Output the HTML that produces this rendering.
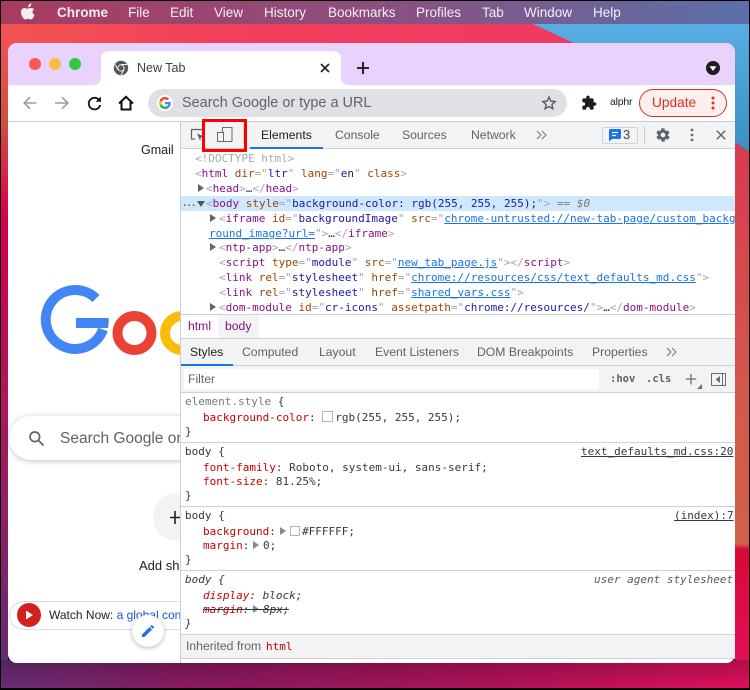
<!DOCTYPE html>
<html><head><meta charset="utf-8"><style>
html,body{margin:0;padding:0;background:#000}
#p{position:relative;width:750px;height:690px;overflow:hidden;background:#000;font-family:"Liberation Sans",sans-serif}
#p>*{position:absolute}
.t{position:absolute;white-space:pre;line-height:16px;height:16px}
.m{font-family:"DejaVu Sans Mono","Liberation Mono",monospace;font-size:11px;color:#303942}
.t.m{transform:translateY(1px)}
.s{font-size:12.2px;color:#5f6368}
.mb{color:#fff;font-size:13.5px;top:5px;opacity:.9}
.b{color:#a3a3ad}.g{color:#881280}.a{color:#994500}.v{color:#1a1aa6}.l{color:#1a73e8;text-decoration:underline}
.r{color:#c80000}.u{text-decoration:underline}
.h{position:absolute;left:181px;width:554px;height:1px;background:#cdd0d4}
.box{display:inline-block;width:9px;height:9px;border:1px solid #b5b5b5;vertical-align:-1px;background:#fff}
.tri{display:inline-block;width:0;height:0;border-left:6px solid #646464;border-top:4px solid transparent;border-bottom:4px solid transparent}
</style></head><body><div id="p">
<svg style="left:1px;top:1px" width="748" height="687" viewBox="1 1 748 687">
<defs>
<linearGradient id="bg1" x1="0" y1="0" x2="1" y2="0"><stop offset="0" stop-color="#f25450"/><stop offset=".3" stop-color="#f13f5c"/><stop offset="1" stop-color="#ef3763"/></linearGradient>
<linearGradient id="menu" x1="0" y1="0" x2="1" y2="0"><stop offset="0" stop-color="#a93b60"/><stop offset=".5" stop-color="#8c4f7f"/><stop offset="1" stop-color="#5a70a8"/></linearGradient>
<linearGradient id="blue" x1="0" y1="0" x2="0" y2="1"><stop offset="0" stop-color="#58aee2"/><stop offset="1" stop-color="#3a90c4"/></linearGradient>
<linearGradient id="lft" x1="0" y1="0" x2="0" y2="1"><stop offset="0" stop-color="#f25450"/><stop offset=".15" stop-color="#d05040"/><stop offset=".24" stop-color="#d82048"/><stop offset=".3" stop-color="#d4004f"/><stop offset=".62" stop-color="#a8185f"/><stop offset="1" stop-color="#632c72"/></linearGradient>
<linearGradient id="rgt" x1="0" y1="0" x2="0" y2="1"><stop offset="0" stop-color="#d83a50"/><stop offset=".5" stop-color="#d25a4c"/><stop offset=".77" stop-color="#d0604c"/><stop offset=".78" stop-color="#d80838"/><stop offset="1" stop-color="#e0105a"/></linearGradient>
<linearGradient id="bot" x1="0" y1="0" x2="1" y2="0"><stop offset="0" stop-color="#6a2d75"/><stop offset=".25" stop-color="#8a1a60"/><stop offset=".65" stop-color="#b01258"/><stop offset="1" stop-color="#e0105c"/></linearGradient>
<linearGradient id="shade" x1="0" y1="0" x2="0" y2="1"><stop offset="0" stop-color="#000" stop-opacity=".22"/><stop offset="1" stop-color="#000" stop-opacity="0"/></linearGradient>
</defs>
<rect x="1" y="24" width="748" height="120" fill="url(#bg1)"/>
<polygon points="533,24 750,24 750,153 735,142 735,60 576,44" fill="url(#blue)"/>
<rect x="1" y="24" width="7" height="640" fill="url(#lft)"/>
<polygon points="735,142 750,153 750,664 735,664" fill="url(#rgt)"/>
<rect x="1" y="660" width="748" height="28" fill="url(#bot)"/>
<rect x="1" y="660" width="748" height="28" fill="url(#shade)"/>
<rect x="1" y="1" width="748" height="23" fill="url(#menu)"/>
</svg>
<svg style="left:21px;top:3px" width="15" height="18" viewBox="0 0 15 18"><path fill="#f4f0f2" d="M10.4 .3c.1 1.1-.3 2-.9 2.8-.6.7-1.5 1.2-2.4 1.1-.1-1 .4-2 .9-2.6C8.600.9 9.600.4 10.400.3zM13.200 6.100c-1 .6-1.700 1.600-1.700 2.800 0 1.400.9 2.500 2.100 3-.3.900-.7 1.700-1.200 2.500-.7 1-1.500 2.100-2.600 2.100s-1.400-.7-2.700-.7-1.700.7-2.700.7c-1.100 0-1.900-1.100-2.700-2.200C.6 12.800 0 10.900 0 9.200 0 6.500 1.800 5 3.500 5c1.100 0 2.100.8 2.800.8s1.800-.8 3.100-.8c1.100 0 2.900.4 3.800 1.100z"/></svg>
<span class="t mb" style="left:57px;font-weight:700">Chrome</span>
<span class="t mb" style="left:128px">File</span>
<span class="t mb" style="left:170px">Edit</span>
<span class="t mb" style="left:214px">View</span>
<span class="t mb" style="left:264px">History</span>
<span class="t mb" style="left:328px">Bookmarks</span>
<span class="t mb" style="left:416px">Profiles</span>
<span class="t mb" style="left:482px">Tab</span>
<span class="t mb" style="left:524px">Window</span>
<span class="t mb" style="left:593px">Help</span>

<div style="left:8px;top:43px;width:727px;height:620px;background:#fff;border-radius:9px;overflow:hidden"></div>
<div style="left:8px;top:43px;width:727px;height:42px;background:#e9d2fb;border-radius:9px 9px 0 0"></div>
<svg style="left:90px;top:50px" width="262" height="36" viewBox="0 0 262 36"><path fill="#fff" d="M3 35c6 0 8-3 8-8V9c0-5 3-8 8-8h224c5 0 8 3 8 8v18c0 5 2 8 8 8z"/></svg>
<svg style="left:25px;top:54px" width="60" height="20"><circle cx="10" cy="10" r="6" fill="#fc5753"/><circle cx="30" cy="10" r="6" fill="#fdbc40"/><circle cx="50" cy="10" r="6" fill="#33c748"/></svg>
<svg style="left:113px;top:60px" width="16" height="16" viewBox="0 0 16 16"><circle cx="8" cy="8" r="7.200" fill="#55555c"/><circle cx="8" cy="8" r="3.600" fill="#fff"/><circle cx="8" cy="8" r="2.700" fill="#55555c"/><path d="M8 4.500h6M5 9.700L2 4.500M11 9.700L8 15" stroke="#fff" stroke-width=".9"/></svg>
<span class="t" style="left:137px;top:60px;font-size:12.5px;color:#3c4043">New Tab</span>
<svg style="left:320px;top:63px" width="10" height="10"><path d="M1 1l8 8M9 1l-8 8" stroke="#222" stroke-width="1.700"/></svg>
<svg style="left:357px;top:62px" width="12" height="12"><path d="M6 0v12M0 6h12" stroke="#111" stroke-width="1.800"/></svg>
<svg style="left:705px;top:60px" width="16" height="16"><circle cx="8" cy="8" r="7" fill="#1f1b20"/><path d="M4.500 6.200h7L8 11z" fill="#fff"/></svg>

<svg style="left:22px;top:95px" width="120" height="16" viewBox="0 0 120 16" fill="none"><path d="M14.500 8H2.500M8 2.200L2.200 8 8 13.800" stroke="#9a9da1" stroke-width="1.600"/><path d="M33 8h12.500M40 2.200L45.800 8 40 13.800" stroke="#9a9da1" stroke-width="1.600"/><path d="M77.500 5.500A5.800 5.800 0 1 0 78.200 10" stroke="#111" stroke-width="1.800"/><path d="M78.900 1.500v5.200h-5.200z" fill="#111"/><path d="M97 8.500L104 1.800 111 8.500M99.500 7v7.500h9V7" stroke="#111" stroke-width="2"/></svg>
<div style="left:148px;top:89px;width:419px;height:28px;border-radius:14px;background:#dfe1e5"></div>
<div style="left:157px;top:95px;width:16px;height:16px;border-radius:8px;background:#fff"></div>
<svg style="left:159px;top:97px" width="12" height="12" viewBox="0 0 24 24"><path fill="#4285f4" d="M23.500 12.300c0-.9-.1-1.600-.2-2.300H12v4.500h6.500c-.3 1.400-1.100 2.700-2.400 3.500v3h3.900c2.300-2.100 3.500-5.200 3.500-8.700z"/><path fill="#34a853" d="M12 24c3.200 0 6-1.100 8-2.900l-3.900-3c-1.100.7-2.500 1.200-4.100 1.200-3.100 0-5.800-2.100-6.700-5H1.300v3.100C3.300 21.300 7.300 24 12 24z"/><path fill="#fbbc05" d="M5.300 14.300c-.5-1.400-.5-3 0-4.500V6.700h-4c-1.700 3.300-1.700 7.300 0 10.700z"/><path fill="#ea4335" d="M12 4.800c1.800 0 3.300.6 4.600 1.800l3.400-3.400C17.900 1.200 15.200 0 12 0 7.300 0 3.300 2.700 1.300 6.700l4 3.100c.9-2.900 3.600-5 6.700-5z"/></svg>
<span class="t" style="left:182px;top:95px;font-size:14.45px;color:#5f6368">Search Google or type a URL</span>
<svg style="left:541px;top:95px" width="16" height="16" viewBox="0 0 24 24"><path fill="none" stroke="#55575a" stroke-width="2" d="M12 3l2.700 6.100 6.600.7-5 4.400 1.500 6.500-5.800-3.400-5.800 3.400 1.500-6.500-5-4.400 6.600-.7z"/></svg>
<svg style="left:581px;top:95px" width="16" height="16" viewBox="0 0 24 24"><path fill="#1c1c20" d="M20.500 11H19V7a2 2 0 0 0-2-2h-4V3.500a2.500 2.500 0 0 0-5 0V5H4a2 2 0 0 0-2 2v3.800h1.500a2.700 2.700 0 0 1 0 5.400H2V20a2 2 0 0 0 2 2h3.800v-1.500a2.700 2.700 0 0 1 5.400 0V22H17a2 2 0 0 0 2-2v-4h1.500a2.500 2.500 0 0 0 0-5z"/></svg>
<span class="t" style="left:610px;top:94px;font-size:10.5px;color:#222;letter-spacing:-.2px">alphr</span>
<div style="left:639px;top:89px;width:86px;height:26px;border:1px solid #d93025;border-radius:14px;background:#fcefed"></div>
<span class="t" style="left:652px;top:95px;font-size:13.7px;color:#d93025">Update</span>
<svg style="left:710px;top:95px" width="6" height="16"><circle cx="3" cy="3" r="1.500" fill="#d93025"/><circle cx="3" cy="8" r="1.500" fill="#d93025"/><circle cx="3" cy="13" r="1.500" fill="#d93025"/></svg>
<div style="left:8px;top:121px;width:727px;height:1px;background:#cbcbcb"></div>

<span class="t" style="left:141px;top:142px;font-size:12.500px;color:#202124">Gmail</span>
<svg style="left:8px;top:270px" width="172" height="100" viewBox="8 270 172 100" fill="none"><path d="M96 298.500A29.500 29.500 0 1 0 103 329.500" stroke="#4285f4" stroke-width="10"/><path d="M76 318h32.500c.4 3 .2 7-.5 10H76z" fill="#4285f4"/><circle cx="134.500" cy="333" r="17" stroke="#ea4335" stroke-width="10"/><circle cx="182" cy="333" r="17" stroke="#fbbc05" stroke-width="10"/></svg>
<div style="left:9px;top:416px;width:260px;height:44px;border-radius:22px;background:#fff;box-shadow:0 1px 6px rgba(32,33,36,.28)"></div>
<svg style="left:28px;top:430px" width="17" height="17" viewBox="0 0 17 17" fill="none"><circle cx="6.800" cy="6.800" r="4.800" stroke="#5f6368" stroke-width="1.700"/><path d="M10.500 10.500l5 5" stroke="#5f6368" stroke-width="1.700"/></svg>
<span class="t" style="left:60px;top:431px;font-size:15.5px;color:#5f6368">Search Google or</span>
<div style="left:153px;top:493px;width:48px;height:48px;border-radius:24px;background:#f1f3f4"></div>
<svg style="left:170px;top:511px" width="10" height="14"><path d="M5 0v13M0 6.500h10" stroke="#202124" stroke-width="1.600"/></svg>
<span class="t" style="left:139px;top:558px;font-size:13px;color:#202124">Add sh</span>
<div style="left:9px;top:601px;width:260px;height:27px;border:1px solid #dadce0;border-radius:15px;background:#fff"></div>
<svg style="left:17px;top:603px" width="24" height="24"><circle cx="12" cy="12" r="12" fill="#d3211f"/><path d="M9 7.500l7 4.500-7 4.500z" fill="#fff"/></svg>
<span class="t" style="left:49px;top:607px;font-size:12px;color:#202124">Watch Now: <span style="color:#1a56d6">a global con</span></span>
<div style="left:132px;top:615px;width:32px;height:32px;border-radius:16px;background:#fff;box-shadow:0 1px 4px rgba(32,33,36,.35)"></div>
<svg style="left:141px;top:624px" width="14" height="14" viewBox="0 0 14 14"><path fill="#1a73e8" d="M1 10.500V13h2.500L11 5.500 8.500 3zM12.800 3.700a.7.700 0 0 0 0-1L11.300 1.200a.7.700 0 0 0-1 0L9.200 2.300l2.500 2.500z"/></svg>

<div style="left:180px;top:122px;width:555px;height:541px;background:#fff;border-left:1px solid #cbcdd1;box-sizing:border-box;border-radius:0 0 9px 0;overflow:hidden"></div>
<div style="left:181px;top:122px;width:554px;height:26px;background:#f1f3f4"></div>
<div class="h" style="top:148px"></div>
<svg style="left:190px;top:127px" width="16" height="16" viewBox="0 0 16 16" fill="none"><path d="M5 12H1.500V2.500h11V6" stroke="#5f6368" stroke-width="1.200"/><path d="M7 6.500l7 3-3 1-1 3z" fill="#5f6368"/></svg>
<svg style="left:216px;top:126px" width="18" height="18" viewBox="0 0 18 18" fill="none" stroke="#6a6e73" stroke-width="1"><path d="M6.500 6V1.500h9.500v14H8"/><rect x="1.500" y="6.500" width="6" height="9"/></svg>
<div style="left:243px;top:126px;width:1px;height:18px;background:#cbcdd1"></div>
<span class="t s" style="left:261px;top:127px;color:#202124">Elements</span>
<span class="t s" style="left:335px;top:127px">Console</span>
<span class="t s" style="left:402px;top:127px">Sources</span>
<span class="t s" style="left:471px;top:127px">Network</span>
<svg style="left:536px;top:130px" width="11" height="10" fill="none" stroke="#70757a"><path d="M1 1l4 4-4 4M6 1l4 4-4 4"/></svg>
<div style="left:250px;top:147px;width:73px;height:2px;background:#1a73e8"></div>
<div style="left:602px;top:127px;width:34px;height:15px;border:1px solid #cfd2d6;border-radius:2px;box-sizing:content-box"></div>
<svg style="left:609px;top:129px" width="12" height="12" viewBox="0 0 12 12"><path fill="#1a73e8" d="M1.500 0h9A1.500 1.500 0 0 1 12 1.500v7A1.500 1.500 0 0 1 10.500 10H3l-3 2.500V1.500A1.500 1.500 0 0 1 1.500 0z"/><path d="M3 3.500h6M3 6.500h4" stroke="#fff" stroke-width="1.200"/></svg>
<span class="t s" style="left:623px;top:127px;color:#444;font-size:13px">3</span>
<div style="left:644px;top:126px;width:1px;height:18px;background:#cbcdd1"></div>
<svg style="left:655px;top:127px" width="16" height="16" viewBox="0 0 24 24"><path fill="#5f6368" fill-rule="evenodd" d="M19.400 13c.1-.3.100-.7.100-1s0-.7-.1-1l2.100-1.600c.2-.2.300-.4.100-.6l-2-3.500c-.1-.2-.4-.3-.6-.2l-2.500 1c-.5-.4-1.100-.7-1.700-1l-.4-2.600c0-.3-.2-.5-.5-.5h-4c-.3 0-.5.200-.5.500l-.4 2.600c-.6.300-1.200.6-1.700 1l-2.500-1c-.2-.1-.5 0-.6.200l-2 3.500c-.1.200-.1.500.1.600L4.600 11c-.1.300-.1.700-.1 1s0 .7.100 1l-2.100 1.600c-.2.200-.3.400-.1.600l2 3.500c.1.200.4.300.6.200l2.500-1c.5.400 1.100.7 1.700 1l.4 2.600c0 .3.200.5.500.5h4c.3 0 .5-.2.500-.5l.4-2.600c.6-.3 1.200-.6 1.700-1l2.500 1c.2.100.5 0 .6-.2l2-3.500c.1-.2.100-.5-.1-.6zM12 15.500a3.500 3.500 0 1 1 0-7 3.500 3.500 0 0 1 0 7z"/></svg>
<svg style="left:689px;top:128px" width="6" height="14"><circle cx="3" cy="2" r="1.400" fill="#6a6e73"/><circle cx="3" cy="7" r="1.400" fill="#6a6e73"/><circle cx="3" cy="12" r="1.400" fill="#6a6e73"/></svg>
<svg style="left:716px;top:130px" width="10" height="10"><path d="M.8.800l8.400 8.400M9.200.800L.8 9.200" stroke="#5f6368" stroke-width="1.400"/></svg>

<div style="left:181px;top:196px;width:554px;height:15px;background:#cfe8fc"></div>
<span class="t m" style="left:195px;top:150px;color:#a9a9a9">&lt;!DOCTYPE html&gt;</span>
<span class="t m" style="left:195px;top:165px"><span class="b">&lt;</span><span class="g">html</span> <span class="a">dir</span><span class="b">="</span><span class="v">ltr</span><span class="b">"</span> <span class="a">lang</span><span class="b">="</span><span class="v">en</span><span class="b">"</span> <span class="a">class</span><span class="b">&gt;</span></span>
<i class="tri" style="position:absolute;left:198px;top:184px"></i>
<span class="t m" style="left:206px;top:180px"><span class="b">&lt;</span><span class="g">head</span><span class="b">&gt;</span>…<span class="b">&lt;/</span><span class="g">head</span><span class="b">&gt;</span></span>
<span class="t m" style="left:182px;top:195px;color:#5f6368;font-size:9px;letter-spacing:-1px;font-weight:700">...</span>
<i style="position:absolute;left:197px;top:201px;width:0;height:0;border-top:6px solid #555;border-left:4px solid transparent;border-right:4px solid transparent"></i>
<span class="t m" style="left:206px;top:195px"><span class="b">&lt;</span><span class="g">body</span> <span class="a">style</span><span class="b">="</span><span class="v">background-color: rgb(255, 255, 255);</span><span class="b">"&gt;</span> <span style="color:#777">==</span> <i style="color:#777">$0</i></span>
<i class="tri" style="position:absolute;left:210px;top:214px"></i>
<span class="t m" style="left:219px;top:210px"><span class="b">&lt;</span><span class="g">iframe</span> <span class="a">id</span><span class="b">="</span><span class="v">backgroundImage</span><span class="b">"</span> <span class="a">src</span><span class="b">="</span><span class="l" style="display:inline-block;width:291px;overflow:hidden;vertical-align:top;height:15px">chrome-untrusted://new-tab-page/custom_backg</span></span>
<span class="t m" style="left:209px;top:225px"><span class="l">round_image?url=</span><span class="b">"&gt;</span>…<span class="b">&lt;/</span><span class="g">iframe</span><span class="b">&gt;</span></span>
<i class="tri" style="position:absolute;left:210px;top:243px"></i>
<span class="t m" style="left:219px;top:239px"><span class="b">&lt;</span><span class="g">ntp-app</span><span class="b">&gt;</span>…<span class="b">&lt;/</span><span class="g">ntp-app</span><span class="b">&gt;</span></span>
<span class="t m" style="left:219px;top:254px"><span class="b">&lt;</span><span class="g">script</span> <span class="a">type</span><span class="b">="</span><span class="v">module</span><span class="b">"</span> <span class="a">src</span><span class="b">="</span><span class="l">new_tab_page.js</span><span class="b">"&gt;&lt;/</span><span class="g">script</span><span class="b">&gt;</span></span>
<span class="t m" style="left:219px;top:269px"><span class="b">&lt;</span><span class="g">link</span> <span class="a">rel</span><span class="b">="</span><span class="v">stylesheet</span><span class="b">"</span> <span class="a">href</span><span class="b">="</span><span class="l">chrome://resources/css/text_defaults_md.css</span><span class="b">"&gt;</span></span>
<span class="t m" style="left:219px;top:284px"><span class="b">&lt;</span><span class="g">link</span> <span class="a">rel</span><span class="b">="</span><span class="v">stylesheet</span><span class="b">"</span> <span class="a">href</span><span class="b">="</span><span class="l">shared_vars.css</span><span class="b">"&gt;</span></span>
<i class="tri" style="position:absolute;left:210px;top:303px"></i>
<span class="t m" style="left:219px;top:299px"><span class="b">&lt;</span><span class="g">dom-module</span> <span class="a">id</span><span class="b">="</span><span class="v">cr-icons</span><span class="b">"</span> <span class="a">assetpath</span><span class="b">="</span><span class="v">chrome://resources/</span><span class="b">"&gt;</span>…<span class="b">&lt;/</span><span class="g">dom-module</span><span class="b">&gt;</span></span>

<div class="h" style="top:314px"></div>
<div style="left:218px;top:315px;width:41px;height:23px;background:#f1f3f4"></div>
<span class="t s" style="left:188px;top:318px;color:#881280">html</span>
<span class="t s" style="left:225px;top:318px;color:#881280">body</span>
<div style="left:181px;top:338px;width:554px;height:28px;background:#f1f3f4"></div>
<div class="h" style="top:338px"></div>
<div class="h" style="top:365px"></div>
<div style="left:181px;top:364px;width:52px;height:2px;background:#1a73e8"></div>
<span class="t s" style="left:190px;top:344px;color:#202124">Styles</span>
<span class="t s" style="left:242px;top:344px">Computed</span>
<span class="t s" style="left:319px;top:344px">Layout</span>
<span class="t s" style="left:375px;top:344px">Event Listeners</span>
<span class="t s" style="left:477px;top:344px">DOM Breakpoints</span>
<span class="t s" style="left:592px;top:344px">Properties</span>
<svg style="left:666px;top:347px" width="11" height="10" fill="none" stroke="#70757a"><path d="M1 1l4 4-4 4M6 1l4 4-4 4"/></svg>
<div style="left:181px;top:366px;width:554px;height:26px;background:#f1f3f4"></div>
<div style="left:184px;top:369px;width:415px;height:20px;background:#fff"></div>
<span class="t s" style="left:188px;top:371px;color:#5f6368">Filter</span>
<span class="t m" style="left:610px;top:370px;font-weight:700;color:#5f6368;font-size:10.500px">:hov</span>
<span class="t m" style="left:646px;top:370px;font-weight:700;color:#5f6368;font-size:10.500px">.cls</span>
<svg style="left:685px;top:373px" width="18" height="16" fill="none"><path d="M6 1v10.500M.8 6h10.500" stroke="#6a6e73" stroke-width="1.300"/><path d="M17 11v5h-5z" fill="#6a6e73"/></svg>
<svg style="left:711px;top:373px" width="15" height="14" fill="none"><rect x=".5" y=".5" width="14" height="12" stroke="#6a6e73"/><path d="M11.500 .5v12" stroke="#6a6e73"/><path d="M9 3v7l-4.500-3.500z" fill="#6a6e73"/></svg>
<div class="h" style="top:392px"></div>

<span class="t m" style="left:185px;top:393px"><span style="color:#777">element.style</span> {</span>
<span class="t m" style="left:203px;top:409px"><span class="r">background-color</span>: <span class="box" style="margin-right:2px"></span>rgb(255, 255, 255);</span>
<span class="t m" style="left:185px;top:423px">}</span>
<div class="h" style="top:442px"></div>
<span class="t m" style="left:185px;top:443px">body {</span>
<span class="t m u" style="left:581px;top:443px">text_defaults_md.css:20</span>
<span class="t m" style="left:203px;top:459px"><span class="r">font-family</span>: Roboto, system-ui, sans-serif;</span>
<span class="t m" style="left:203px;top:473px"><span class="r">font-size</span>: 81.25%;</span>
<span class="t m" style="left:185px;top:487px">}</span>
<div class="h" style="top:506px"></div>
<span class="t m" style="left:185px;top:507px">body {</span>
<span class="t m u" style="left:674px;top:507px">(index):7</span>
<span class="t m" style="left:203px;top:523px"><span class="r">background</span>:</span>
<i class="tri" style="position:absolute;left:280px;top:527px;border-left-color:#888"></i>
<i class="box" style="position:absolute;left:290px;top:526px;width:8px;height:8px"></i>
<span class="t m" style="left:302px;top:523px">#FFFFFF;</span>
<span class="t m" style="left:203px;top:537px"><span class="r">margin</span>:</span>
<i class="tri" style="position:absolute;left:253px;top:541px;border-left-color:#888"></i>
<span class="t m" style="left:263px;top:537px">0;</span>
<span class="t m" style="left:185px;top:551px">}</span>
<div class="h" style="top:570px"></div>
<span class="t m" style="left:185px;top:571px;font-style:italic">body {</span>
<span class="t m" style="left:594px;top:571px;font-style:italic;color:#5a5a5a">user agent stylesheet</span>
<span class="t m" style="left:203px;top:587px;font-style:italic"><span class="r">display</span>: block;</span>
<span class="t m" style="left:203px;top:601px;font-style:italic"><span class="r">margin</span>:</span>
<i class="tri" style="position:absolute;left:253px;top:605px;border-left-color:#888"></i>
<span class="t m" style="left:263px;top:601px;font-style:italic">8px;</span>
<div style="left:203px;top:609px;width:86px;height:1px;background:#303942"></div>
<span class="t m" style="left:185px;top:615px;font-style:italic">}</span>
<div style="left:181px;top:635px;width:554px;height:23px;background:#f1f3f4"></div>
<div class="h" style="top:634px"></div>
<div class="h" style="top:658px"></div>
<span class="t s" style="left:186px;top:638px">Inherited from</span>
<span class="t m r" style="left:266px;top:638px;color:#c80000">html</span>
<div style="left:202px;top:119px;width:45px;height:33px;border:3px solid #f00;box-sizing:border-box"></div>
</div></body></html>
